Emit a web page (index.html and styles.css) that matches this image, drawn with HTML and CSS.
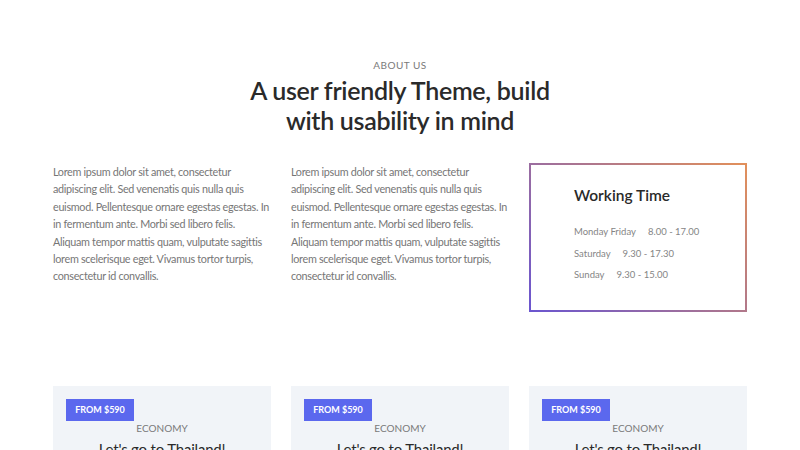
FILE: index.html
```html
<!DOCTYPE html>
<html>
<head>
<meta charset="utf-8">
<link rel="stylesheet" href="styles.css">
</head>
<body>
<section class="about">
  <div class="eyebrow">ABOUT US</div>
  <h1 class="title">A user friendly Theme, build<br>with usability in mind</h1>
  <div class="cols">
    <p class="text">Lorem ipsum dolor sit amet, consectetur<br>adipiscing elit. Sed venenatis quis nulla quis<br>euismod. Pellentesque ornare egestas egestas. In<br>in fermentum ante. Morbi sed libero felis.<br>Aliquam tempor mattis quam, vulputate sagittis<br>lorem scelerisque eget. Vivamus tortor turpis,<br>consectetur id convallis.</p>
    <p class="text">Lorem ipsum dolor sit amet, consectetur<br>adipiscing elit. Sed venenatis quis nulla quis<br>euismod. Pellentesque ornare egestas egestas. In<br>in fermentum ante. Morbi sed libero felis.<br>Aliquam tempor mattis quam, vulputate sagittis<br>lorem scelerisque eget. Vivamus tortor turpis,<br>consectetur id convallis.</p>
    <div class="hours">
      <div class="hours-inner">
        <h3 class="hours-title">Working Time</h3>
        <ul class="hours-list">
          <li><span class="day">Monday Friday</span><span>8.00 - 17.00</span></li>
          <li><span class="day">Saturday</span><span>9.30 - 17.30</span></li>
          <li><span class="day">Sunday</span><span>9.30 - 15.00</span></li>
        </ul>
      </div>
    </div>
  </div>
</section>
<section class="cards">
  <div class="card">
    <span class="badge">FROM $590</span>
    <div class="cat">ECONOMY</div>
    <h4 class="card-title">Let's go to Thailand!</h4>
  </div>
  <div class="card">
    <span class="badge">FROM $590</span>
    <div class="cat">ECONOMY</div>
    <h4 class="card-title">Let's go to Thailand!</h4>
  </div>
  <div class="card">
    <span class="badge">FROM $590</span>
    <div class="cat">ECONOMY</div>
    <h4 class="card-title">Let's go to Thailand!</h4>
  </div>
</section>
</body>
</html>
```

FILE: styles.css
```css
* { box-sizing: border-box; }
html, body { margin: 0; padding: 0; background: #fff; }
body {
  font-family: "Lato", "Open Sans", sans-serif;
  color: #2b2b2b;
  overflow: hidden;
  height: 450px;
}
.about {
  width: 694px;
  margin: 0 auto;
  padding-top: 58px;
}
.eyebrow {
  text-align: center;
  font-size: 10px;
  letter-spacing: 0.5px;
  color: #7a7a7a;
  line-height: 14px;
}
.title {
  margin: 3px 0 0;
  text-align: center;
  font-size: 25px;
  line-height: 30px;
  letter-spacing: -0.3px;
  font-weight: 600;
  color: #2a2a2a;
}
.cols {
  display: grid;
  grid-template-columns: repeat(3, minmax(0, 1fr));
  column-gap: 20px;
  margin-top: 28px;
  align-items: start;
}
.text {
  margin: 0;
  font-size: 10.8px;
  line-height: 17.4px;
  letter-spacing: -0.3px;
  color: #767676;
  white-space: nowrap;
}
.hours {
  padding: 2px;
  background: linear-gradient(45deg, #6a55d0, #e2905a);
  height: 149px;
}
.hours-inner {
  background: #fff;
  height: 100%;
  padding: 20px 0 0 43px;
}
.hours-title {
  margin: 0;
  font-size: 15.5px;
  line-height: 20px;
  font-weight: 600;
  color: #2a2a2a;
}
.hours-list {
  list-style: none;
  margin: 20px 0 0;
  padding: 0;
  font-size: 9.5px;
  color: #858585;
  white-space: nowrap;
}
.hours-list li {
  line-height: 14px;
  margin-bottom: 7.5px;
}
.day { margin-right: 12px; }
.cards {
  width: 694px;
  margin: 74px auto 0;
  display: grid;
  grid-template-columns: repeat(3, minmax(0, 1fr));
  column-gap: 20px;
}
.card {
  background: #f1f4f8;
  padding: 13px 13px 0;
  text-align: center;
  height: 64px;
  overflow: hidden;
}
.badge {
  display: block;
  width: 68px;
  height: 22px;
  line-height: 22px;
  background: #5b68ee;
  color: #fff;
  font-size: 9px;
  font-weight: 700;
}
.cat {
  margin-top: 0;
  font-size: 10px;
  color: #7a7a7a;
  line-height: 14px;
}
.card-title {
  margin: 4px 0 0;
  font-size: 15px;
  line-height: 20px;
  letter-spacing: -0.2px;
  font-weight: 400;
  color: #2a2a2a;
}
```
